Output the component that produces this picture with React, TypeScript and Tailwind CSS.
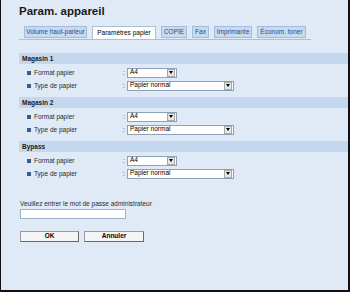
import React from "react";

function Select({ value, w }: { value: string; w: string }) {
  return (
    <div className={`flex items-center h-[10px] bg-white border border-[#8aa2bc] ${w}`}>
      <span className="flex-1 pl-[2px] text-[6.5px] leading-none text-black truncate">{value}</span>
      <span className="w-[8px] h-[8px] mr-[1px] bg-[#e6e6e6] border border-[#a8a8a8] flex items-center justify-center">
        <svg width="4" height="3" viewBox="0 0 4 3"><path d="M0 0h4L2 3z" fill="#000" /></svg>
      </span>
    </div>
  );
}

function Row({ label, value, w }: { label: string; value: string; w: string }) {
  return (
    <div className="flex items-center h-[13px]">
      <span className="w-[4px] h-[4px] bg-[#3a5a8c] ml-[8px] mr-[3px]" />
      <span className="w-[89px] text-[6.5px] text-[#2a2a2a] whitespace-nowrap">{label}</span>
      <span className="text-[6.5px] text-[#2a2a2a] w-[4px]">:</span>
      <Select value={value} w={w} />
    </div>
  );
}

function Section({ title }: { title: string }) {
  return (
    <div>
      <div className="h-[11px] bg-[#c3d8ee] flex items-center pl-[3px] text-[6.5px] font-bold text-[#1a1a1a]">{title}</div>
      <div className="pt-[2px] pb-[5px]">
        <Row label="Format papier" value="A4" w="w-[50px]" />
        <Row label="Type de papier" value="Papier normal" w="w-[107px]" />
      </div>
    </div>
  );
}

const tabs: { t: string; w: string; active?: boolean }[] = [
  { t: "Volume haut-parleur", w: "w-[63px]" },
  { t: "Paramètres papier", w: "w-[64px]", active: true },
  { t: "COPIE", w: "w-[26px]" },
  { t: "Fax", w: "w-[17px]" },
  { t: "Imprimante", w: "w-[38px]" },
  { t: "Économ. toner", w: "w-[49px]" },
];

export default function App() {
  return (
    <div
      className="w-[350px] h-[292px] bg-[#dfeaf6] border-l border-r-2 border-b-2 border-[#111] overflow-hidden"
      style={{ fontFamily: '"Liberation Sans", Arial, sans-serif' }}
    >
      <div className="pl-[18px] pt-[4px] text-[11.5px] font-bold text-[#1a1a1a] leading-[15px]">Param. appareil</div>
      <div className="ml-[18px] w-[292px] mt-[8px] flex items-end gap-[5px] pl-[5px] border-b border-[#aebfd2] h-[13px]">
        {tabs.map(({ t, w, active }) => (
          <div
            key={t}
            className={
              active
                ? `${w} h-[13px] bg-white border border-b-0 border-[#aebfd2] text-[6.5px] text-black flex items-center justify-center whitespace-nowrap`
                : `${w} h-[12px] mb-[1px] bg-[#c6daf2] border border-[#a3bcda] text-[6.5px] text-[#2b4a8a] flex items-center justify-center whitespace-nowrap`
            }
          >
            {t}
          </div>
        ))}
      </div>
      <div className="ml-[18px] mt-[13px]">
        <Section title="Magasin 1" />
        <Section title="Magasin 2" />
        <Section title="Bypass" />
      </div>
      <div className="ml-[19px] mt-[15px]">
        <div className="text-[6.5px] text-[#2a2a2a] leading-[8px]">Veuillez entrer le mot de passe administrateur</div>
        <div className="w-[106px] h-[10px] bg-white border border-[#9fb3c8] mt-[1px]" />
        <div className="flex gap-[5px] mt-[12px]">
          <button className="w-[59px] h-[11px] bg-[#f5f5f5] border border-[#9a9a9a] border-b-[#6a6a6a] border-r-[#6a6a6a] text-[6.5px] font-bold leading-none text-black">OK</button>
          <button className="w-[60px] h-[11px] bg-[#f5f5f5] border border-[#9a9a9a] border-b-[#6a6a6a] border-r-[#6a6a6a] text-[6.5px] font-bold leading-none text-black">Annuler</button>
        </div>
      </div>
    </div>
  );
}
